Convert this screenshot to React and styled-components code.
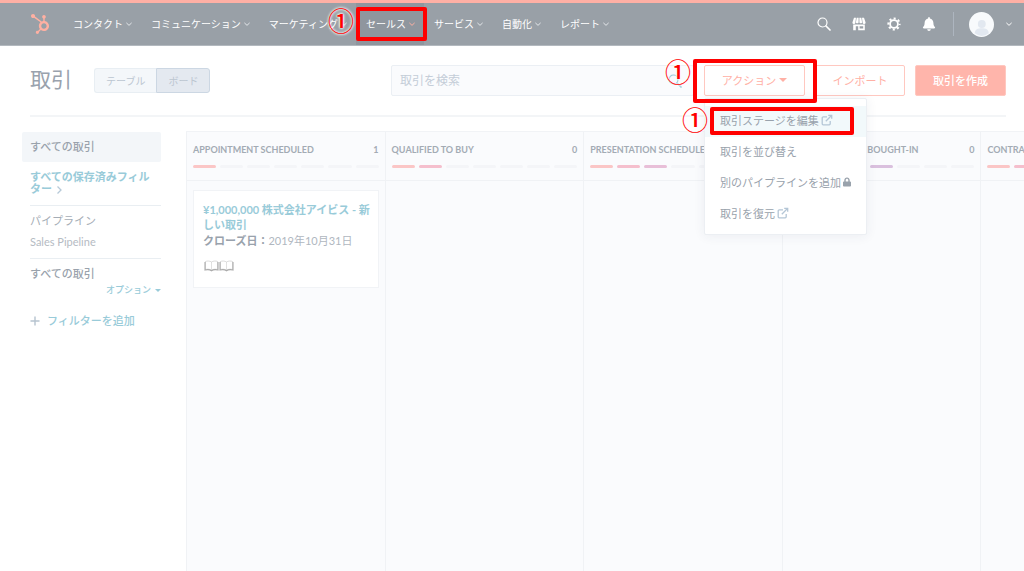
import React from 'react';
import styled, { createGlobalStyle } from 'styled-components';
import { FaHubspot, FaLock, FaBell } from 'react-icons/fa';

const GlobalStyle = createGlobalStyle`
  * { box-sizing: border-box; }
  html, body, #root { height: 100%; }
  body {
    margin: 0;
    background: #fff;
    color: #99a2ac;
    font-family: Lato, 'Noto Sans CJK JP', sans-serif;
    font-size: 11px;
    overflow: hidden;
  }
  button, input {
    font: inherit;
    color: inherit;
    margin: 0;
  }
  a { color: inherit; text-decoration: none; }
`;

const Page = styled.div`
  min-height: 100%;
  display: flex;
  flex-direction: column;
`;

const TopBar = styled.header`
  height: 46px;
  flex-shrink: 0;
  display: flex;
  align-items: center;
  padding: 0 12px 0 30px;
  background: #99a0a7;
  border-top: 3px solid #ffb0a5;
  border-bottom: 1px solid #b3b9bf;
  color: #fff;
`;

const Logo = styled.a`
  display: flex;
  width: 33px;
  color: #ffb0a2;
`;

const Nav = styled.nav`
  display: flex;
  align-self: stretch;
  flex: 1;
`;

const NavLink = styled.a`
  position: relative;
  display: flex;
  align-items: center;
  gap: 3px;
  padding: 0 9px 2px 10px;
  font-size: 10px;
  white-space: nowrap;
  background: ${p => p.$active ? '#8f969e' : 'transparent'};
  & > svg { color: ${p => p.$active ? '#ffb0a2' : '#e4e7ea'}; margin-top: 2px; }
`;

const Tools = styled.div`
  display: flex;
  align-items: center;
  gap: 21px;
`;

const IconButton = styled.button`
  display: flex;
  padding: 0;
  border: none;
  background: none;
  color: #fff;
`;

const Account = styled.button`
  display: flex;
  align-items: center;
  gap: 12px;
  margin-left: -4px;
  padding: 0 0 0 15px;
  height: 24px;
  border: none;
  border-left: 1px solid #adb5bf;
  background: none;
  color: #fff;
`;

const PageHead = styled.div`
  display: flex;
  align-items: center;
  margin: 0 18px 0 30px;
  padding: 19px 0;
  border-bottom: 2px solid #f3f5f7;
`;

const Title = styled.h1`
  margin: 0;
  width: 64px;
  padding-bottom: 4px;
  font-size: 21px;
  font-weight: 400;
  line-height: 27px;
  color: #99a2ad;
`;

const Toggle = styled.div`
  display: flex;
  margin-right: auto;
`;

const ToggleButton = styled.button`
  height: 25px;
  padding: 0 11px 1px;
  font-size: 10px;
  color: #bcc6d1;
  border: 1px solid ${p => p.$on ? '#ccd7e3' : '#e8eef3'};
  border-radius: ${p => p.$on ? '0 3px 3px 0' : '3px 0 0 3px'};
  border-right-width: ${p => p.$on ? '1px' : '0'};
  background: ${p => p.$on ? '#e4e9f0' : '#f4f7fa'};
`;

const HeadTools = styled.div`
  display: flex;
  gap: 10px;
  flex: 0 1 615px;
`;

const SearchBox = styled.label`
  flex: 1;
  min-width: 0;
  height: 31px;
  display: flex;
  align-items: center;
  padding: 0 11px 0 8px;
  border: 1px solid #ebeff4;
  border-radius: 2px;
  background: #fafbfd;
  color: #99cbd9;
`;

const SearchInput = styled.input`
  flex: 1;
  min-width: 0;
  padding: 0;
  border: none;
  outline: none;
  background: none;
  font-size: 12px;
  &::placeholder { color: #c4cdd8; opacity: 1; }
`;

const Anchor = styled.div`
  position: relative;
`;

const Button = styled.button`
  height: 31px;
  width: ${p => p.$width};
  display: flex;
  align-items: center;
  justify-content: center;
  gap: 3px;
  padding: 0 0 2px;
  white-space: nowrap;
  border: 1px solid #ffc8c0;
  border-radius: 2px;
  background: ${p => p.$primary ? '#ffb5ab' : '#fff'};
  color: ${p => p.$primary ? '#fff' : '#ffb0a5'};
  font-weight: ${p => p.$primary ? 500 : 400};
`;

const Caret = styled.span`
  border: ${p => p.$size} solid transparent;
  border-top-color: currentColor;
  border-bottom: 0;
`;

const Menu = styled.ul`
  position: absolute;
  top: 33px;
  left: 0;
  z-index: 2;
  width: 163px;
  margin: 0;
  padding: 7px 0 4px;
  list-style: none;
  background: #fff;
  border: 1px solid #eceff3;
  border-radius: 2px;
  box-shadow: 0 1px 12px rgba(45, 62, 80, 0.07);
`;

const MenuItem = styled.li`
  position: relative;
  background: ${p => p.$active ? '#f2f9fb' : 'transparent'};
`;

const MenuLink = styled.a`
  display: flex;
  align-items: center;
  gap: 2px;
  height: 31px;
  padding: 0 15px 4px;
  white-space: nowrap;
  svg { color: ${p => p.$locked ? '#99a2ac' : '#b4c6d6'}; }
`;

const Body = styled.div`
  flex: 1;
  display: flex;
  padding: 14px 0 0 22px;
`;

const Sidebar = styled.aside`
  width: 139px;
  flex-shrink: 0;
  margin-right: 25px;
  padding-top: 1px;
`;

const CurrentView = styled.a`
  display: block;
  padding: 0 8px;
  line-height: 30px;
  border-radius: 2px;
  background: #f3f6f9;
  font-weight: 500;
`;

const Section = styled.section`
  margin-left: 8px;
  padding: ${p => p.$pad};
  border-bottom: 1px solid ${p => p.$last ? 'transparent' : '#e9eef2'};
`;

const SavedLink = styled.a`
  display: block;
  padding-right: 10px;
  line-height: 12px;
  font-weight: 700;
  color: #99cbd9;
  svg { color: #b6c9d8; vertical-align: -1px; }
`;

const Line = styled.div`
  line-height: 21px;
  color: ${p => p.$light ? '#b5bbc3' : '#a5adb6'};
`;

const GroupTitle = styled.div`
  line-height: 17px;
  font-weight: 500;
`;

const OptionsButton = styled.button`
  display: flex;
  align-items: center;
  gap: 4px;
  margin: 0 0 0 auto;
  padding: 0;
  border: none;
  background: none;
  font-size: 9px;
  line-height: 16px;
  font-weight: 500;
  color: #99cbd9;
`;

const AddFilter = styled.button`
  display: flex;
  align-items: center;
  gap: 7px;
  margin-top: 15px;
  padding: 0;
  border: none;
  background: none;
  line-height: 16px;
  font-weight: 500;
  color: #99cbd9;
  white-space: nowrap;
  svg { color: #b6c3cf; }
`;

const Board = styled.main`
  flex: 1;
  min-width: 0;
  display: flex;
  overflow: hidden;
  background: #fafbfd;
  border-top: 1px solid #f1f3f6;
`;

const Column = styled.section`
  flex: 0 0 23.7%;
  border-left: 1px solid #f0f2f5;
`;

const ColumnHead = styled.div`
  height: 49px;
  padding: 9px 6px 0;
  border-bottom: 1px solid #f0f2f5;
`;

const ColumnTitle = styled.h2`
  display: flex;
  justify-content: space-between;
  margin: 0 0 7px;
  font-size: 9px;
  font-weight: 700;
  line-height: 17px;
  white-space: nowrap;
  color: #a3abb4;
`;

const Steps = styled.div`
  display: grid;
  grid-template-columns: repeat(7, 1fr);
  gap: 4px;
`;

const Step = styled.span`
  height: 3px;
  border-radius: 2px;
  background: ${p => p.$color || '#f4f5f8'};
`;

const Card = styled.article`
  margin: 9px 6px;
  height: 98px;
  padding: 11px 6px 11px 9px;
  background: #fff;
  border: 1px solid #f1f3f6;
`;

const DealLink = styled.a`
  display: block;
  line-height: 15px;
  font-weight: 700;
  color: #99cbd9;
`;

const CloseDate = styled.div`
  line-height: 18px;
  color: #b0b7bf;
  b { font-weight: 700; color: #99a2ac; }
`;

const Contacts = styled.div`
  display: flex;
  padding: 10px 0 0 1px;
`;

const Highlight = styled.span`
  position: absolute;
  z-index: 3;
  inset: ${p => p.$inset};
  border: 4px solid #f00;
  border-radius: 2px;
  pointer-events: none;
`;

const Marker = styled.span`
  position: absolute;
  z-index: 3;
  top: ${p => p.$top};
  left: ${p => p.$left};
  font-family: 'Noto Sans CJK JP', sans-serif;
  font-size: 26px;
  font-weight: 500;
  line-height: 26px;
  color: #f00;
  text-shadow: 0 0 3px #fff, 0 0 3px #fff, 0 0 2px #fff;
  pointer-events: none;
`;

const NAV = ['コンタクト', 'コミュニケーション', 'マーケティング', 'セールス', 'サービス', '自動化', 'レポート'];

const STEP_COLORS = ['#fbc6c6', '#f5bfcd', '#e8bfd8', '#dac0de', '#cfc3e4'];

const COLUMNS = [
  { title: 'APPOINTMENT SCHEDULED', count: 1 },
  { title: 'QUALIFIED TO BUY', count: 0 },
  { title: 'PRESENTATION SCHEDULED', count: 0 },
  { title: 'DECISION MAKER BOUGHT-IN', count: 0 },
  { title: 'CONTRACT SENT', count: 0 },
];

const Chevron = ({ size = 6, right }) => (
  <svg width={size} height={size} viewBox="0 0 8 8" fill="none" stroke="currentColor" strokeWidth="1.3">
    <path d={right ? 'M2.5 .5L6 4 2.5 7.5' : 'M.5 2.5L4 5.8l3.5-3.3'} />
  </svg>
);

const SearchIcon = () => (
  <svg width="14" height="14" viewBox="0 0 14 14" fill="none" stroke="currentColor">
    <circle cx="5.5" cy="5.5" r="4.5" strokeWidth="1.2" />
    <path d="M9 9l4 4" strokeWidth="1.7" strokeLinecap="round" />
  </svg>
);

const StoreIcon = () => (
  <svg width="14" height="14" viewBox="0 0 14 14" fill="currentColor">
    <path d="M2 .8h2L3.4 5.5a1.5 1.5 0 0 1-3 0zM4.7.8h1.9v4.7a1.5 1.5 0 0 1-2.7 0zM7.4.8h1.9l.8 4.7a1.5 1.5 0 0 1-2.7 0zM10 .8h2l1.6 4.7a1.5 1.5 0 0 1-3 0z" />
    <path fillRule="evenodd" d="M1.2 7.6h11.6v5.6H6.2V9.3H3.8v3.9H1.2zM7.6 9.2v2.3h3.6V9.2z" />
  </svg>
);

const GearIcon = () => (
  <svg width="14" height="14" viewBox="0 0 14 14" fill="none" stroke="currentColor">
    <circle cx="7" cy="7" r="3.9" strokeWidth="1.8" />
    <circle cx="7" cy="7" r="5.6" strokeWidth="2" strokeDasharray="2.1 2.298" strokeDashoffset="1.05" />
  </svg>
);

const ExternalIcon = () => (
  <svg width="12" height="12" viewBox="0 0 12 12" fill="none" stroke="currentColor" strokeWidth="1.3">
    <path d="M6 2.8H2.2a1 1 0 0 0-1 1v6a1 1 0 0 0 1 1h6a1 1 0 0 0 1-1V7" />
    <path d="M4.8 7.2l5.7-5.7M7.2 1.3h3.5v3.5" />
  </svg>
);

const Avatar = () => (
  <svg width="25" height="25" viewBox="0 0 24 24">
    <circle cx="12" cy="12" r="12" fill="#f8fafc" />
    <circle cx="12.3" cy="11.5" r="3.8" fill="#e2e8f0" />
    <path d="M5.5 20.5c0-4 3-5 6.8-5s6.6 1 6.6 5A12 12 0 0 1 12 23a12 12 0 0 1-6.5-2.5z" fill="#e2e8f0" />
  </svg>
);

const BookIcon = () => (
  <svg width="15" height="12" viewBox="0 0 15 12" fill="none" stroke="#aaa">
    <path d="M7.5 2C6 .8 3 .8 1.5 1.5v8c1.5-.5 4.5-.5 6 .7 1.5-1.2 4.5-1.2 6-.7v-8C12 .8 9 .8 7.5 2z" strokeWidth=".6" stroke="#c4c4c4" />
    <path d="M7.5 2v8" strokeWidth=".6" stroke="#ccc" />
    <path d="M1 2v8c2-.5 5-.4 6.5.7C9 9.6 12 9.5 14 10V2" strokeWidth="1.1" />
  </svg>
);

const PlusIcon = () => (
  <svg width="10" height="10" viewBox="0 0 10 10" stroke="currentColor" strokeWidth="1.4">
    <path d="M5 .5v9M.5 5h9" />
  </svg>
);

export default function App() {
  return (
    <Page>
      <GlobalStyle />
      <TopBar>
        <Logo href="#" aria-label="HubSpot"><FaHubspot size={20} /></Logo>
        <Nav>
          {NAV.map(label => {
            const active = label === 'セールス';
            return (
              <NavLink key={label} href="#" $active={active}>
                {label}
                <Chevron />
                {active && <Highlight $inset="4px -3px 4px 0" />}
                {active && <Marker $top="4px" $left="-28px">①</Marker>}
              </NavLink>
            );
          })}
        </Nav>
        <Tools>
          <IconButton aria-label="検索"><SearchIcon /></IconButton>
          <IconButton aria-label="マーケットプレイス"><StoreIcon /></IconButton>
          <IconButton aria-label="設定"><GearIcon /></IconButton>
          <IconButton aria-label="通知"><FaBell size={14} /></IconButton>
          <Account aria-label="アカウント">
            <Avatar />
            <Chevron />
          </Account>
        </Tools>
      </TopBar>

      <PageHead>
        <Title>取引</Title>
        <Toggle>
          <ToggleButton>テーブル</ToggleButton>
          <ToggleButton $on>ボード</ToggleButton>
        </Toggle>
        <HeadTools>
          <SearchBox>
            <SearchInput type="text" placeholder="取引を検索" aria-label="取引を検索" />
            <SearchIcon />
          </SearchBox>
          <Anchor>
            <Button $width="101px">アクション<Caret $size="4px" /></Button>
            <Highlight $inset="-6px -12px -7px -11px" />
            <Marker $top="-7px" $left="-39px">①</Marker>
            <Menu>
              <MenuItem $active>
                <MenuLink href="#">取引ステージを編集<ExternalIcon /></MenuLink>
                <Highlight $inset="1px 12px 2px 5px" />
                <Marker $top="0" $left="-23px">①</Marker>
              </MenuItem>
              <MenuItem><MenuLink href="#">取引を並び替え</MenuLink></MenuItem>
              <MenuItem><MenuLink href="#" $locked>別のパイプラインを追加<FaLock size={10} /></MenuLink></MenuItem>
              <MenuItem><MenuLink href="#">取引を復元<ExternalIcon /></MenuLink></MenuItem>
            </Menu>
          </Anchor>
          <Button $width="90px">インポート</Button>
          <Button $width="91px" $primary>取引を作成</Button>
        </HeadTools>
      </PageHead>

      <Body>
        <Sidebar>
          <CurrentView href="#">すべての取引</CurrentView>
          <Section $pad="9px 0 10px">
            <SavedLink href="#">すべての保存済みフィルター <Chevron size={8} right /></SavedLink>
          </Section>
          <Section $pad="4px 0 6px">
            <Line>パイプライン</Line>
            <Line $light>Sales Pipeline</Line>
          </Section>
          <Section $pad="6px 0 0" $last>
            <GroupTitle>すべての取引</GroupTitle>
            <OptionsButton>オプション<Caret $size="3px" /></OptionsButton>
            <AddFilter><PlusIcon />フィルターを追加</AddFilter>
          </Section>
        </Sidebar>

        <Board>
          {COLUMNS.map((col, i) => (
            <Column key={col.title}>
              <ColumnHead>
                <ColumnTitle>
                  <span>{col.title}</span>
                  <span>{col.count}</span>
                </ColumnTitle>
                <Steps>
                  {Array.from({ length: 7 }, (_, n) => (
                    <Step key={n} $color={n <= i ? STEP_COLORS[n] : null} />
                  ))}
                </Steps>
              </ColumnHead>
              {i === 0 && (
                <Card>
                  <DealLink href="#">¥1,000,000 株式会社アイビス - 新しい取引</DealLink>
                  <CloseDate><b>クローズ日：</b>2019年10月31日</CloseDate>
                  <Contacts><BookIcon /><BookIcon /></Contacts>
                </Card>
              )}
            </Column>
          ))}
        </Board>
      </Body>
    </Page>
  );
}
